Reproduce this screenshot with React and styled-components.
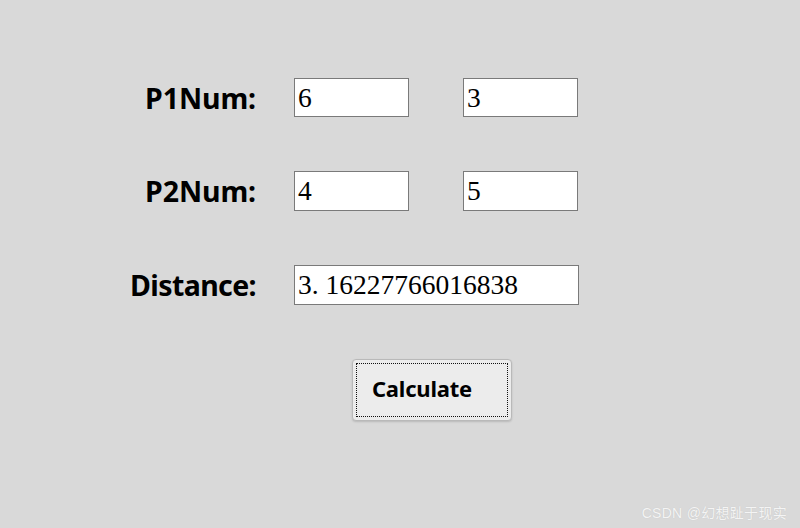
import React from "react";
import styled, { createGlobalStyle } from "styled-components";

const GlobalStyle = createGlobalStyle`
  html, body {
    margin: 0;
    padding: 0;
    background: #d9d9d9;
  }
  body {
    font-family: "Noto Sans", "Liberation Sans", sans-serif;
  }
`;

const Window = styled.div`
  position: relative;
  width: 800px;
  height: 528px;
  background: #d9d9d9;
  overflow: hidden;
`;

const Form = styled.div`
  display: grid;
  grid-template-columns: 294px 115px 54px 116px;
  grid-template-rows: 39px 40px 40px auto;
  row-gap: 54px;
  padding-top: 78px;
`;

const Label = styled.label`
  grid-column: 1;
  padding-right: 38px;
  text-align: right;
  font-family: "Noto Sans", "Liberation Sans", sans-serif;
  font-weight: 700;
  font-size: 28.5px;
  line-height: 40px;
  color: #000;
  letter-spacing: ${(p) => (p.$tight ? "-0.6px" : "-0.1px")};
`;

const Field = styled.input`
  grid-column: ${(p) => p.$col};
  box-sizing: border-box;
  width: ${(p) => (p.$col === 4 ? "115px" : "100%")};
  height: 100%;
  margin: 0;
  padding: 0 0 0 3px;
  border: 1px solid #7a7a7a;
  background: #fff;
  font-family: "Liberation Serif", "Noto Sans CJK SC", serif;
  font-size: 27.5px;
  color: #000;
  outline: none;
`;

const ButtonRow = styled.div`
  grid-column: 2 / 5;
  padding-left: 58px;
`;

const Button = styled.button`
  box-sizing: border-box;
  width: 160px;
  height: 62px;
  border: 1px solid #b9b9b9;
  border-radius: 4px;
  background: #ececec;
  box-shadow: 0 1px 2px rgba(0, 0, 0, 0.15);
  outline: 1px dotted #111;
  outline-offset: -5px;
  font-family: "Noto Sans", "Liberation Sans", sans-serif;
  font-weight: 700;
  font-size: 22px;
  letter-spacing: -0.2px;
  color: #000;
  padding: 0 20px 4px 0;
  cursor: pointer;
`;

const Watermark = styled.div`
  position: absolute;
  right: 13px;
  bottom: 6px;
  font-family: "Liberation Sans", "Noto Sans CJK SC", sans-serif;
  font-size: 14px;
  color: #f4f4f4;
  text-shadow: 0 0 1px rgba(0, 0, 0, 0.12);
  letter-spacing: 0.3px;
`;

export default function App() {
  return (
    <>
      <GlobalStyle />
      <Window>
        <Form>
          <Label>P1Num:</Label>
          <Field $col={2} defaultValue="6" />
          <Field $col={4} defaultValue="3" />

          <Label>P2Num:</Label>
          <Field $col={2} defaultValue="4" />
          <Field $col={4} defaultValue="5" />

          <Label $tight>Distance:</Label>
          <Field $col="2 / 5" defaultValue="3. 16227766016838" />

          <ButtonRow>
            <Button>Calculate</Button>
          </ButtonRow>
        </Form>
        <Watermark>CSDN @幻想趾于现实</Watermark>
      </Window>
    </>
  );
}
